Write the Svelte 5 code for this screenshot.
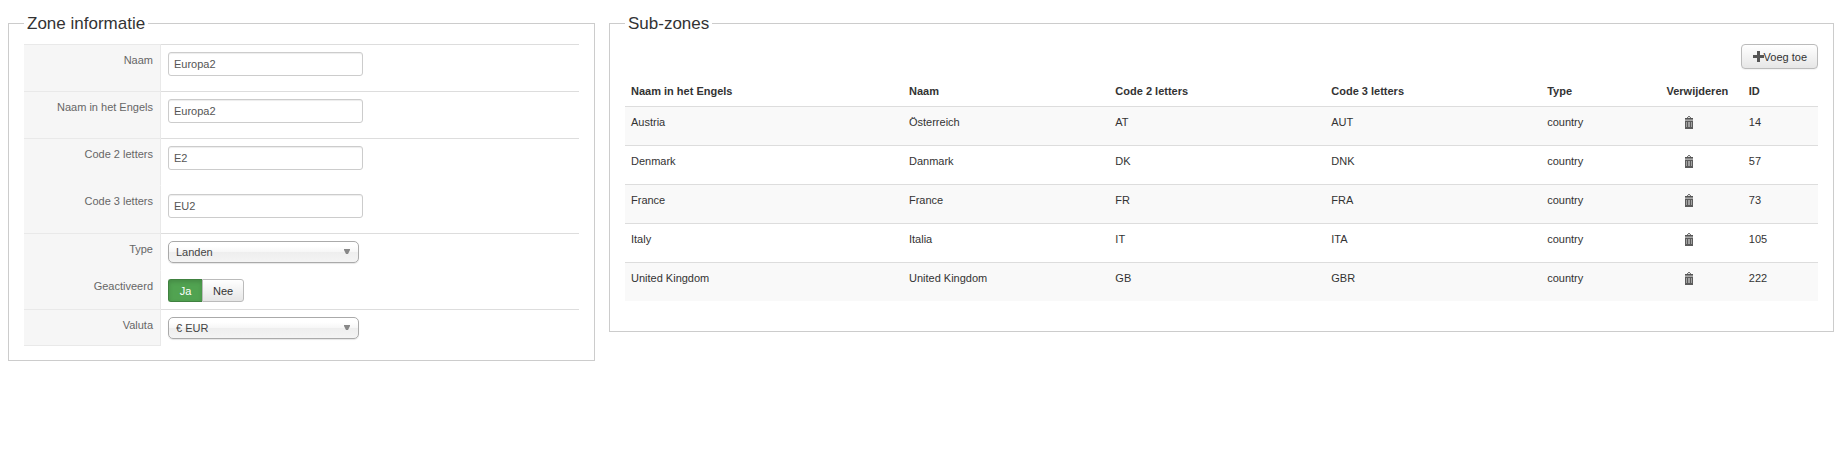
<script lang="ts">
  type SubZone = { id: number; english: string; name: string; code2: string; code3: string; type: string };

  let zone = $state({
    name: 'Europa2',
    english: 'Europa2',
    code2: 'E2',
    code3: 'EU2',
    type: 'country',
    published: '1',
    currency: 'EUR',
  });

  let subZones: SubZone[] = $state([
    { id: 14, english: 'Austria', name: 'Österreich', code2: 'AT', code3: 'AUT', type: 'country' },
    { id: 57, english: 'Denmark', name: 'Danmark', code2: 'DK', code3: 'DNK', type: 'country' },
    { id: 73, english: 'France', name: 'France', code2: 'FR', code3: 'FRA', type: 'country' },
    { id: 105, english: 'Italy', name: 'Italia', code2: 'IT', code3: 'ITA', type: 'country' },
    { id: 222, english: 'United Kingdom', name: 'United Kingdom', code2: 'GB', code3: 'GBR', type: 'country' },
  ]);

  const textFields = [
    { key: 'name', label: 'Naam' },
    { key: 'english', label: 'Naam in het Engels' },
    { key: 'code2', label: 'Code 2 letters' },
    { key: 'code3', label: 'Code 3 letters', joined: true },
  ];

  function removeZone(id: number) {
    subZones = subZones.filter((z) => z.id !== id);
  }
</script>

{#snippet arrow()}
  <svg class="arrow" width="6" height="5" viewBox="0 0 6 5" aria-hidden="true"><path d="M0 0h6v1L4 5H2L0 1z" fill="#888" /></svg>
{/snippet}

<div class="page">
  <fieldset class="panel">
    <legend>Zone informatie</legend>
    <div class="form">
      {#each textFields as field}
        <div class="row" class:joined={field.joined}>
          <label class="key" for="zone-{field.key}">{field.label}</label>
          <div class="value tall">
            <input class="text" id="zone-{field.key}" type="text" bind:value={zone[field.key]} />
          </div>
        </div>
      {/each}
      <div class="row">
        <label class="key" for="zone-type">Type</label>
        <div class="value">
          <span class="chosen">
            <select id="zone-type" bind:value={zone.type}>
              <option value="country">Landen</option>
              <option value="state">Staten</option>
            </select>
            {@render arrow()}
          </span>
        </div>
      </div>
      <div class="row joined">
        <span class="key" id="published-label">Geactiveerd</span>
        <div class="value">
          <div class="toggle" role="radiogroup" aria-labelledby="published-label">
            <label class:on={zone.published === '1'}>
              <input type="radio" name="published" value="1" bind:group={zone.published} />Ja
            </label>
            <label class:off={zone.published === '0'}>
              <input type="radio" name="published" value="0" bind:group={zone.published} />Nee
            </label>
          </div>
        </div>
      </div>
      <div class="row last">
        <label class="key" for="zone-currency">Valuta</label>
        <div class="value">
          <span class="chosen">
            <select id="zone-currency" bind:value={zone.currency}>
              <option value="EUR">€ EUR</option>
              <option value="USD">$ USD</option>
            </select>
            {@render arrow()}
          </span>
        </div>
      </div>
    </div>
  </fieldset>

  <fieldset class="panel">
    <legend>Sub-zones</legend>
    <div class="toolbar">
      <button type="button" class="btn">
        <svg width="11" height="11" viewBox="0 0 11 11" aria-hidden="true"><path d="M4 0h3v4h4v3H7v4H4V7H0V4h4z" fill="#555" /></svg>
        <span>Voeg toe</span>
      </button>
    </div>
    <table>
      <colgroup>
        <col class="c-english" />
        <col class="c-name" />
        <col class="c-code" />
        <col class="c-code" />
        <col class="c-type" />
        <col class="c-remove" />
        <col />
      </colgroup>
      <thead>
        <tr>
          <th>Naam in het Engels</th>
          <th>Naam</th>
          <th>Code 2 letters</th>
          <th>Code 3 letters</th>
          <th>Type</th>
          <th>Verwijderen</th>
          <th>ID</th>
        </tr>
      </thead>
      <tbody>
        {#each subZones as z (z.id)}
          <tr>
            <td>{z.english}</td>
            <td>{z.name}</td>
            <td>{z.code2}</td>
            <td>{z.code3}</td>
            <td>{z.type}</td>
            <td class="remove">
              <button type="button" aria-label="Verwijderen" onclick={() => removeZone(z.id)}>
                <svg width="8" height="13" viewBox="0 0 8 13" shape-rendering="crispEdges" aria-hidden="true">
                  <path d="M2 2V1h1V0h2v1h1v1z" fill="#777" />
                  <path d="M3 1h2v1H3z" fill="#ddd" />
                  <path d="M0 2h8v1H0z" fill="#555" />
                  <path d="M0 3h8v1H0z" fill="#888" />
                  <path d="M0 4h8v1H0z" fill="#aaa" />
                  <path d="M0 5h8v8H0z" fill="#5c5c5c" />
                  <path d="M1 6h1v5H1zM3 6h2v5H3zM6 6h1v5H6z" fill="#a2a2a2" />
                </svg>
              </button>
            </td>
            <td>{z.id}</td>
          </tr>
        {/each}
      </tbody>
    </table>
  </fieldset>
</div>

<style>
  :global(body) { background: #fff; }

  .page {
    display: grid;
    grid-template-columns: 587fr 1225fr;
    align-items: start;
    gap: 14px;
    padding: 14px 3px 14px 8px;
    color: #333;
    font: 11px/18px "Liberation Sans", Arial, Helvetica, sans-serif;
  }

  input, select, button { font: inherit; }

  .panel {
    min-width: 0;
    margin: 0;
    padding: 11px 15px 14px 15px;
    border: 1px solid #ccc;
  }
  legend {
    padding: 1px 3px 0;
    font-size: 17px;
    line-height: 18px;
  }

  .row { display: flex; }
  .key {
    box-sizing: border-box;
    width: 137px;
    flex-shrink: 0;
    padding: 6px 7px 0 0;
    border-top: 1px solid #e9e9e9;
    border-right: 1px solid #e9e9e9;
    background: #f6f6f6;
    color: #666;
    text-align: right;
  }
  .value {
    flex: 1;
    padding: 7px;
    border-top: 1px solid #ddd;
  }
  .value.tall { padding-bottom: 15px; }
  .joined .key { border-top-color: #f6f6f6; }
  .joined .value { padding-top: 8px; border-top-color: transparent; }
  .last .key { border-bottom: 1px solid #e9e9e9; }

  .text {
    display: block;
    box-sizing: border-box;
    width: 195px;
    height: 24px;
    padding: 0 5px;
    border: 1px solid #ccc;
    border-radius: 3px;
    box-shadow: inset 0 1px 1px rgba(0, 0, 0, 0.075);
    color: #555;
  }

  .chosen { position: relative; display: block; width: 191px; }
  .chosen select {
    display: block;
    appearance: none;
    width: 100%;
    height: 22px;
    padding: 0 24px 0 7px;
    border: 1px solid #aaa;
    border-radius: 5px;
    background: linear-gradient(#fff 20%, #f6f6f6 50%, #eee 52%, #f4f4f4 100%);
    box-shadow: 0 1px 1px rgba(0, 0, 0, 0.1);
    color: #444;
  }
  .arrow { position: absolute; top: 8px; right: 9px; pointer-events: none; }

  .toggle { display: flex; }
  .toggle label {
    position: relative;
    box-sizing: border-box;
    min-width: 34px;
    height: 23px;
    padding: 2px 10px;
    border: 1px solid #bbb;
    border-radius: 0 3px 3px 0;
    background: linear-gradient(#fff, #e6e6e6);
    text-align: center;
    cursor: pointer;
  }
  .toggle label:first-child { border-right: 0; border-radius: 3px 0 0 3px; }
  .toggle input { position: absolute; inset: 0; margin: 0; opacity: 0; }
  .toggle .on {
    border-color: #408140;
    background: #51a351;
    box-shadow: inset 0 2px 4px rgba(0, 0, 0, 0.15);
    color: #fff;
  }
  .toggle .off { background: #bd362f; color: #fff; }

  .toolbar { display: flex; justify-content: flex-end; margin-bottom: 7px; }
  .btn {
    display: flex;
    align-items: center;
    height: 25px;
    padding: 0 10px 0 11px;
    border: 1px solid #bbb;
    border-radius: 4px;
    background: linear-gradient(#fff, #e6e6e6);
    box-shadow: 0 1px 1px rgba(0, 0, 0, 0.05);
    color: #333;
  }

  table {
    width: 100%;
    margin-bottom: 16px;
    border-collapse: separate;
    border-spacing: 0;
    table-layout: fixed;
  }
  .c-english { width: 23.3%; }
  .c-name { width: 17.3%; }
  .c-code { width: 18.1%; }
  .c-type { width: 10%; }
  .c-remove { width: 6.9%; }

  th { padding: 6px; text-align: left; white-space: nowrap; }
  td { padding: 6px 6px 14px; border-top: 1px solid #ddd; vertical-align: top; }
  tbody tr:nth-child(odd) td { background: #f9f9f9; }

  .remove { padding-left: 24px; }
  .remove button {
    display: block;
    padding: 3px 1px 2px;
    border: 0;
    background: none;
    cursor: pointer;
  }
  .remove svg { display: block; }
</style>
